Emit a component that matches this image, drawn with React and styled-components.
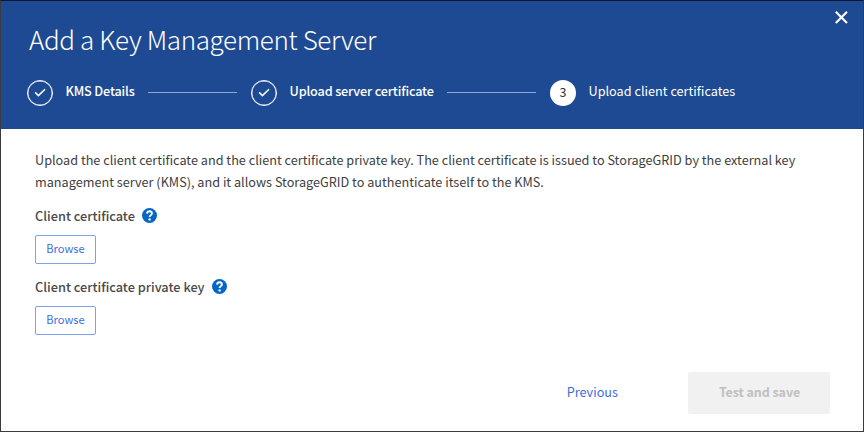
import React from "react";
import styled, { createGlobalStyle, css } from "styled-components";

const GlobalStyle = createGlobalStyle`
  *, *::before, *::after { box-sizing: border-box; }
  body {
    margin: 0;
    background: #fff;
    font-family: "Noto Sans CJK SC", "Noto Sans", sans-serif;
  }
  button { font-family: inherit; }
`;

const Dialog = styled.main`
  display: flex;
  flex-direction: column;
  width: 864px;
  height: 432px;
  border: 1px solid #3b3b3d;
  border-top-color: #0b1730;
  background: #fff;
  overflow: hidden;
`;

const Header = styled.header`
  flex: none;
  display: grid;
  grid-template-columns: 1fr auto;
  grid-template-rows: 79px 49px;
  height: 128px;
  background: #1e4a93;
  color: #fff;
`;

const Title = styled.h1`
  margin: 18px 0 0 28px;
  font-size: 26px;
  line-height: 40px;
  font-weight: 300;
  letter-spacing: -0.36px;
  white-space: nowrap;
`;

const CloseButton = styled.button`
  align-self: start;
  display: flex;
  margin: 9px 15px 0 0;
  padding: 0;
  border: 0;
  background: none;
  color: #fff;
`;

const Steps = styled.ol`
  grid-column: 1 / -1;
  display: flex;
  align-items: center;
  align-self: start;
  margin: 0 0 0 26px;
  padding: 0;
  height: 26px;
  list-style: none;
`;

const Step = styled.li`
  display: flex;
  align-items: center;
  flex: none;
  width: ${(p) => p.$width}px;
`;

const StepMark = styled.span`
  flex: none;
  display: flex;
  align-items: center;
  justify-content: center;
  width: 26px;
  height: 26px;
  margin-right: 12.5px;
  border-radius: 50%;
  font-size: 12.5px;
  line-height: 20px;
  ${(p) =>
    p.$current
      ? css`
          padding-bottom: 2px;
          background: #fff;
          color: #333;
        `
      : css`
          border: 1.6px solid #fff;
          box-shadow: inset 0 0 0 0.4px #fff;
        `}
`;

const StepLabel = styled.span`
  font-size: 12.7px;
  line-height: 20px;
  font-weight: ${(p) => (p.$current ? 400 : 500)};
  letter-spacing: ${(p) => (p.$current ? 0 : -0.17)}px;
  white-space: nowrap;
  margin-top: -4px;
`;

const StepLine = styled.span`
  flex: none;
  width: 89px;
  height: 1px;
  margin: -1px 14px 0 auto;
  background: #8fa9d6;
`;

const Body = styled.section`
  flex: 1;
  padding: 20px 34px 0;
  color: #404040;
`;

const Intro = styled.p`
  margin: 0 0 14px;
  font-size: 12.68px;
  line-height: 22px;
  white-space: nowrap;
`;

const Field = styled.div`
  height: 71px;
`;

const FieldLabel = styled.div`
  display: flex;
  align-items: center;
  gap: 7.5px;
  height: 18px;
  margin-bottom: 10px;
  color: #4a4a4a;
  font-size: 12.76px;
  line-height: 18px;
  font-weight: 500;
`;

const BrowseButton = styled.button`
  display: block;
  width: 61px;
  height: 29px;
  padding: 0 0 4px;
  border: 1px solid #7ba3ec;
  border-radius: 2px;
  background: #fff;
  color: #416fd9;
  font-size: 11.1px;
  line-height: 20px;
`;

const Footer = styled.footer`
  flex: none;
  display: flex;
  justify-content: flex-end;
  gap: 70px;
  padding: 0 33px 17px 0;
`;

const PreviousButton = styled.button`
  padding: 0 0 2px;
  border: 0;
  background: none;
  color: #3f6ee0;
  font-size: 12.7px;
  line-height: 20px;
`;

const SaveButton = styled.button`
  width: 142px;
  height: 42px;
  padding: 0 0 2px 1px;
  border: 0;
  border-radius: 2px;
  background: #f1f1f1;
  color: #c0c0c0;
  font-size: 12.5px;
  line-height: 20px;
  font-weight: 700;
  letter-spacing: -0.08px;
`;

const CheckIcon = () => (
  <svg width="12" height="10" viewBox="0 0 12 10" fill="none" stroke="#fff" strokeWidth="1.5">
    <path d="M1.2 4.4 4.4 7.6 11 1.2" />
  </svg>
);

const CloseIcon = () => (
  <svg width="14" height="14" viewBox="0 0 14 14" stroke="#fff" strokeWidth="2.1">
    <path d="M1.8 1.8 13 13M13 1.8 1.8 13" />
  </svg>
);

const HelpIcon = () => (
  <svg width="15" height="16" viewBox="0 0 15 16" fill="none">
    <circle cx="7.5" cy="7.5" r="7.5" fill="#0566c8" />
    <path d="M5.1 5.6C5.2 4.1 6.2 3.3 7.5 3.3c1.4 0 2.4.8 2.4 2.1 0 1.7-2.3 1.8-2.3 3.7" stroke="#fff" strokeWidth="1.9" />
    <circle cx="7.6" cy="11.4" r="1.2" fill="#fff" />
  </svg>
);

const steps = [
  { label: "KMS Details", width: 224, done: true },
  { label: "Upload server certificate", width: 299, done: true },
  { label: "Upload client certificates", width: 200, done: false },
];

const fields = ["Client certificate", "Client certificate private key"];

export default function App() {
  return (
    <>
      <GlobalStyle />
      <Dialog>
        <Header>
          <Title>Add a Key Management Server</Title>
          <CloseButton aria-label="Close">
            <CloseIcon />
          </CloseButton>
          <Steps>
            {steps.map((step, i) => (
              <Step key={step.label} $width={step.width}>
                <StepMark $current={!step.done}>{step.done ? <CheckIcon /> : i + 1}</StepMark>
                <StepLabel $current={!step.done}>{step.label}</StepLabel>
                {step.done && <StepLine />}
              </Step>
            ))}
          </Steps>
        </Header>
        <Body>
          <Intro>
            Upload the client certificate and the client certificate private key. The client
            certificate is issued to StorageGRID by the external key
            <br />
            management server (KMS), and it allows StorageGRID to authenticate itself to the KMS.
          </Intro>
          {fields.map((label) => (
            <Field key={label}>
              <FieldLabel>
                {label}
                <HelpIcon />
              </FieldLabel>
              <BrowseButton>Browse</BrowseButton>
            </Field>
          ))}
        </Body>
        <Footer>
          <PreviousButton>Previous</PreviousButton>
          <SaveButton disabled>Test and save</SaveButton>
        </Footer>
      </Dialog>
    </>
  );
}
